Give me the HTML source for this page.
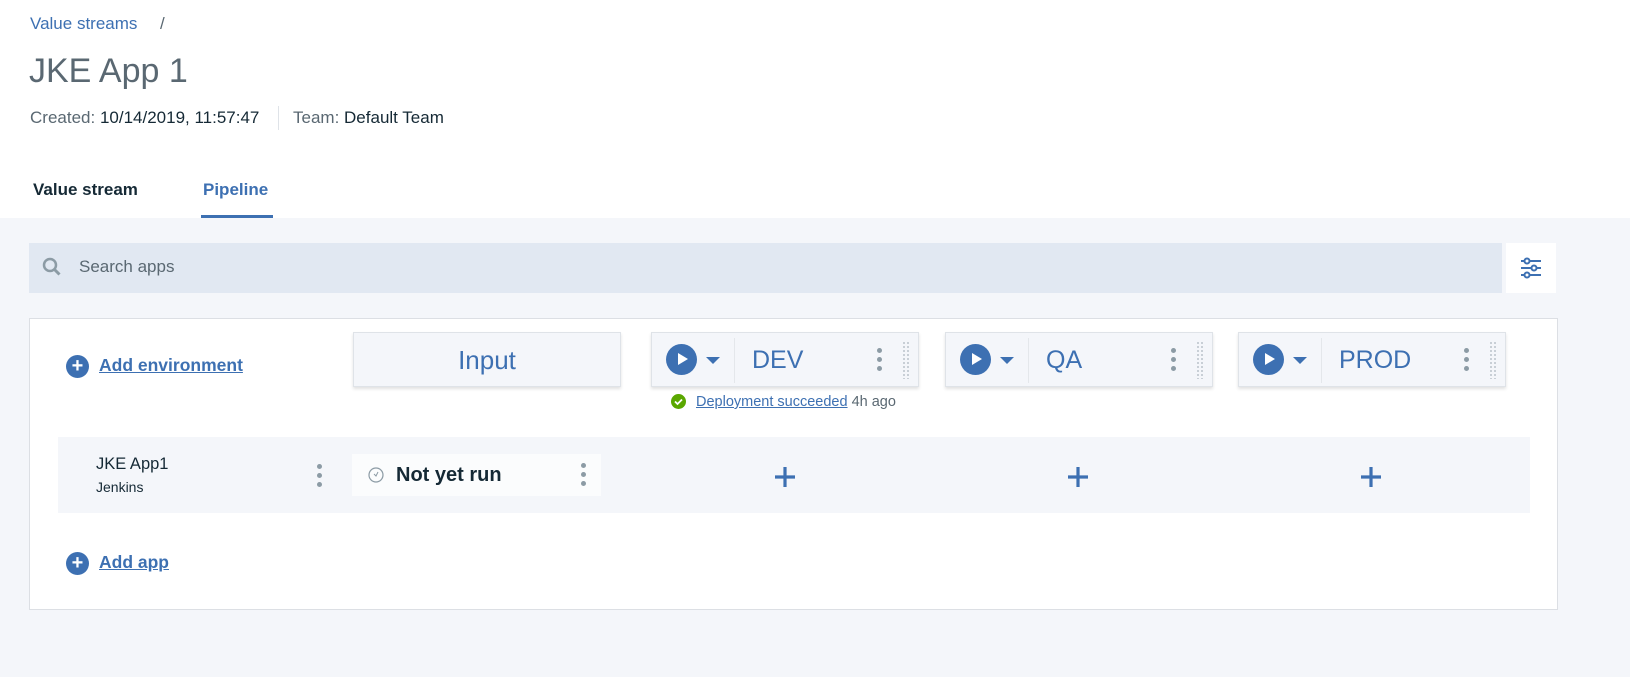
<!DOCTYPE html>
<html><head><style>
*{margin:0;padding:0;box-sizing:border-box}
body{width:1630px;height:677px;overflow:hidden;background:#f4f6fa;font-family:"Liberation Sans",sans-serif;position:relative}
.a{position:absolute}
.top{left:0;top:0;width:1630px;height:218px;background:#fff}
.blue{color:#3d70b2}
.env{position:absolute;top:332px;width:268px;height:55px;background:#f4f6fa;border:1px solid #dfe3e8;box-shadow:0 2px 3px rgba(0,0,0,.12)}
.play{position:absolute;left:14px;top:11px;width:31px;height:31px;border-radius:50%;background:#3d70b2}
.play:after{content:"";position:absolute;left:12px;top:9px;border-left:10px solid #fff;border-top:6.5px solid transparent;border-bottom:6.5px solid transparent}
.caret{position:absolute;left:54px;top:24px;border-top:7px solid #3d70b2;border-left:7px solid transparent;border-right:7px solid transparent}
.div{position:absolute;left:82px;top:5px;width:1px;height:45px;background:#e4e7eb}
.name{position:absolute;left:100px;top:13px;font-size:25px;color:#3d70b2}
.keb{position:absolute;width:5px}
.keb i{display:block;width:5px;height:5px;border-radius:50%;background:#8c9ba5;margin-bottom:4px}
.drag{position:absolute;left:250px;top:8px;width:8px;height:38px;background-image:radial-gradient(circle,#c5ccd3 1px,transparent 1.2px);background-size:4px 4px}
.plus{position:absolute;top:466px}
.circ{position:absolute;left:66px;width:23px;height:23px;border-radius:50%;background:#3d70b2;color:#fff;font-size:20px;line-height:22px;text-align:center;font-weight:bold}
.lnk{position:absolute;left:99px;font-size:17.5px;font-weight:bold;color:#3d70b2;text-decoration:underline}
</style></head><body>
<div class="a top"></div>
<div class="a blue" style="left:30px;top:14px;font-size:17px">Value streams</div>
<div class="a" style="left:160px;top:14px;font-size:17px;color:#5a6872">/</div>
<div class="a" style="left:29px;top:52px;font-size:34px;color:#5a6872">JKE App 1</div>
<div class="a" style="left:30px;top:108px;font-size:17px;color:#5a6872">Created: <span style="color:#152935">10/14/2019, 11:57:47</span></div>
<div class="a" style="left:278px;top:106px;width:1px;height:24px;background:#dfe3e8"></div>
<div class="a" style="left:293px;top:108px;font-size:17px;color:#5a6872">Team: <span style="color:#152935">Default Team</span></div>
<div class="a" style="left:33px;top:180px;font-size:17px;font-weight:bold;color:#152935">Value stream</div>
<div class="a blue" style="left:203px;top:180px;font-size:17px;font-weight:bold">Pipeline</div>
<div class="a" style="left:201px;top:215px;width:72px;height:3px;background:#3d70b2"></div>

<div class="a" style="left:29px;top:243px;width:1473px;height:50px;background:#e1e8f2"></div>
<svg class="a" style="left:42px;top:257px" width="22" height="22" viewBox="0 0 22 22"><circle cx="8" cy="8" r="6" fill="none" stroke="#8c9ba5" stroke-width="2.5"/><path d="M12.5 12.5l5 5" stroke="#8c9ba5" stroke-width="3"/></svg>
<div class="a" style="left:79px;top:257px;font-size:17px;color:#5a6872">Search apps</div>
<div class="a" style="left:1506px;top:243px;width:50px;height:50px;background:#fff"></div>
<svg class="a" style="left:1520px;top:256px" width="22" height="24" viewBox="0 0 22 24" stroke="#3d70b2" stroke-width="2" fill="#fff"><path d="M1 5h20M1 12h20M1 19h20"/><circle cx="7" cy="5" r="2.5"/><circle cx="14" cy="12" r="2.5"/><circle cx="7" cy="19" r="2.5"/></svg>

<div class="a" style="left:29px;top:318px;width:1529px;height:292px;background:#fff;border:1px solid #dcdfe4"></div>
<div class="circ" style="top:355px">+</div>
<div class="lnk" style="top:355px">Add environment</div>

<div class="env" style="left:353px"><div class="a" style="left:0;right:0;top:12px;text-align:center;font-size:26px;color:#3d70b2">Input</div></div>
<div class="env" style="left:651px"><div class="play"></div><div class="caret"></div><div class="div"></div><div class="name">DEV</div><div class="keb" style="left:225px;top:15px"><i></i><i></i><i></i></div><div class="drag"></div></div>
<div class="env" style="left:945px"><div class="play"></div><div class="caret"></div><div class="div"></div><div class="name">QA</div><div class="keb" style="left:225px;top:15px"><i></i><i></i><i></i></div><div class="drag"></div></div>
<div class="env" style="left:1238px"><div class="play"></div><div class="caret"></div><div class="div"></div><div class="name">PROD</div><div class="keb" style="left:225px;top:15px"><i></i><i></i><i></i></div><div class="drag"></div></div>

<svg class="a" style="left:671px;top:394px" width="15" height="15" viewBox="0 0 15 15"><circle cx="7.5" cy="7.5" r="7.5" fill="#5aa700"/><path d="M4 7.5l2.5 2.5 4.5-4.5" stroke="#fff" stroke-width="1.8" fill="none"/></svg>
<div class="a" style="left:696px;top:394px;font-size:14.5px;color:#5a6872"><span style="color:#3d70b2;text-decoration:underline">Deployment succeeded</span> 4h ago</div>

<div class="a" style="left:58px;top:437px;width:1472px;height:76px;background:#f4f6fa"></div>
<div class="a" style="left:96px;top:455px;font-size:16.5px;color:#152935">JKE App1</div>
<div class="a" style="left:96px;top:479px;font-size:14px;color:#152935">Jenkins</div>
<div class="keb" style="left:317px;top:464px"><i></i><i></i><i></i></div>
<div class="a" style="left:352px;top:454px;width:249px;height:42px;background:#fbfcfd"></div>
<svg class="a" style="left:368px;top:467px" width="16" height="16" viewBox="0 0 16 16"><circle cx="8" cy="8" r="7" fill="none" stroke="#8c9ba5" stroke-width="1.2"/><path d="M6 7l2 2 2-4" stroke="#8c9ba5" stroke-width="1" fill="none"/></svg>
<div class="a" style="left:396px;top:464px;font-size:20px;font-weight:bold;color:#152935">Not yet run</div>
<div class="keb" style="left:581px;top:463px"><i></i><i></i><i></i></div>
<svg class="plus" style="left:774px" width="22" height="22" viewBox="0 0 22 22"><path d="M11 1v20M1 11h20" stroke="#3d70b2" stroke-width="3.2"/></svg>
<svg class="plus" style="left:1067px" width="22" height="22" viewBox="0 0 22 22"><path d="M11 1v20M1 11h20" stroke="#3d70b2" stroke-width="3.2"/></svg>
<svg class="plus" style="left:1360px" width="22" height="22" viewBox="0 0 22 22"><path d="M11 1v20M1 11h20" stroke="#3d70b2" stroke-width="3.2"/></svg>

<div class="circ" style="top:552px">+</div>
<div class="lnk" style="top:552px">Add app</div>
</body></html>
